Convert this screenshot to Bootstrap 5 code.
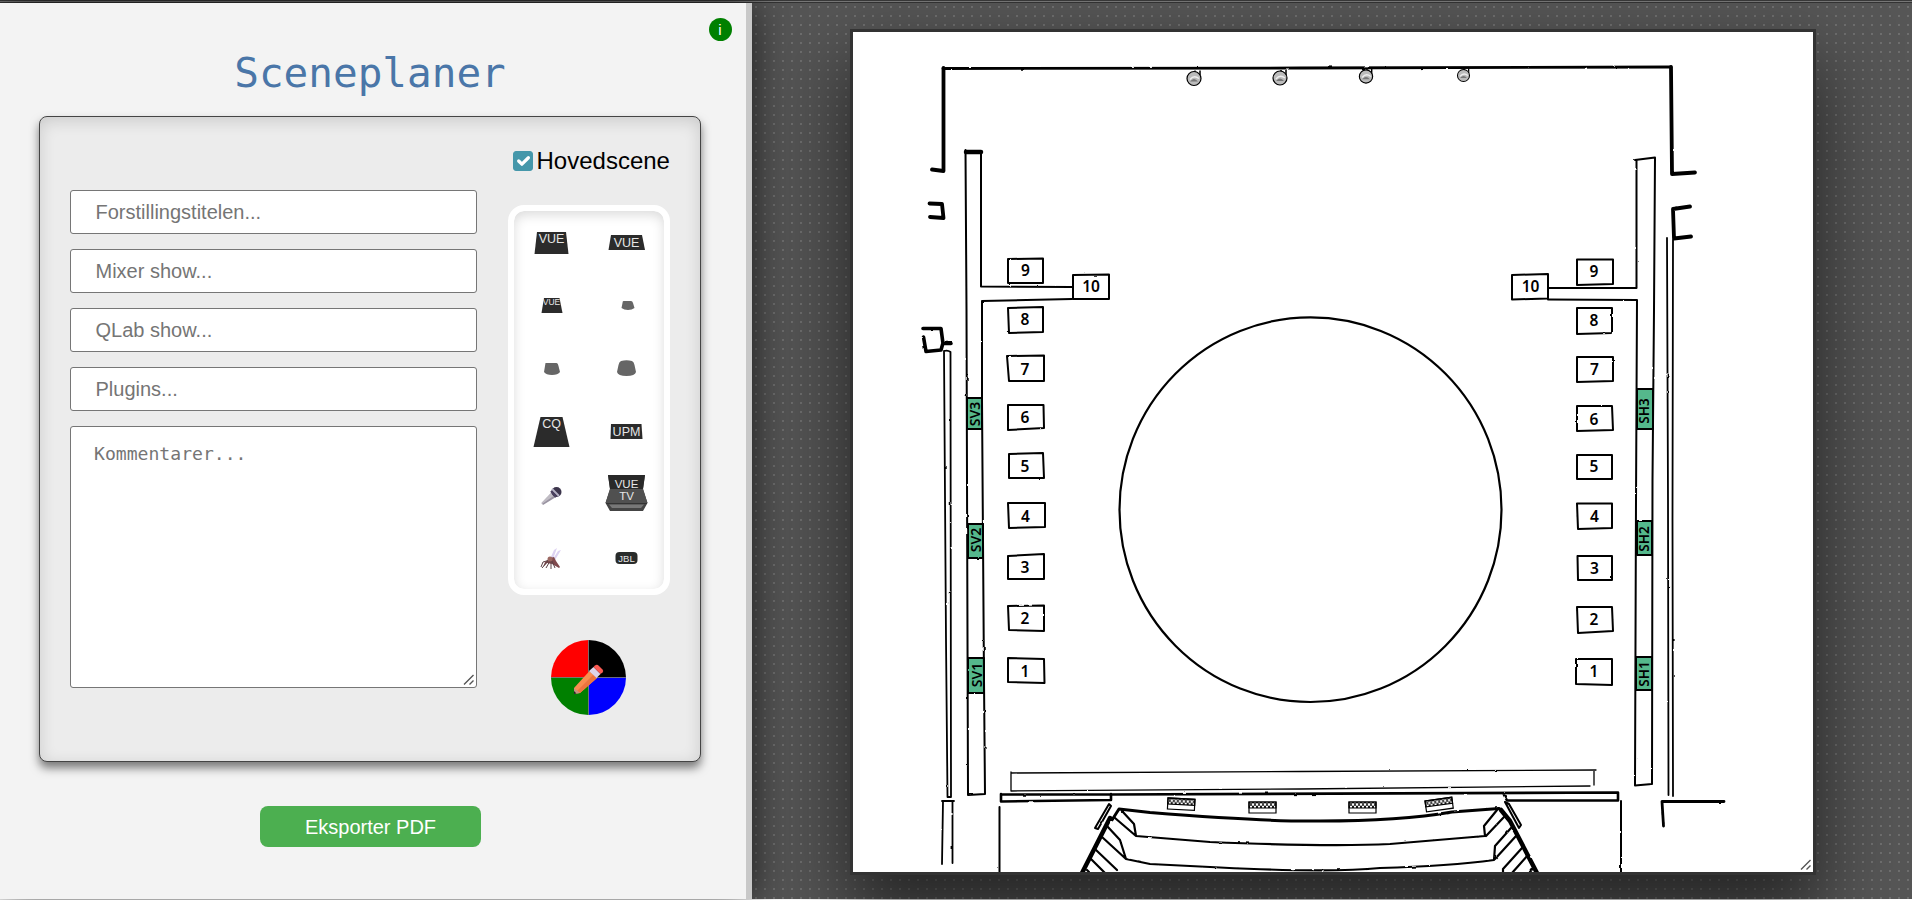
<!DOCTYPE html>
<html lang="no">
<head>
<meta charset="utf-8">
<title>Sceneplaner</title>
<link href="https://cdn.jsdelivr.net/npm/bootstrap@5.3.0/dist/css/bootstrap.min.css" rel="stylesheet">
<script src="https://cdn.jsdelivr.net/npm/bootstrap@5.3.0/dist/js/bootstrap.bundle.min.js"></script>
<style>
body{font-family:"Liberation Sans",sans-serif;color:#000;height:900px;overflow:hidden;background:#fff}
.topline{height:3px;background:linear-gradient(#393939 0 1px,#777 1px 2px,#333 2px)}
.app{height:896px}
.side{width:752px;background:#f3f3f3;border-right:6px solid #c8c8c8;z-index:2;box-shadow:0 0 38px rgba(0,0,0,.7)}
.info{width:23px;height:23px;top:14.5px;right:14.5px;background:#008000;font-size:15px;line-height:23px;font-weight:400}
.title{font:41px/48px "DejaVu Sans Mono",monospace;color:#4a76a8;margin:46px 0 0 -6px}
.panel{width:662px;height:646px;margin:19px 0 0 39px;border:1px solid #444;border-radius:8px;background:#ececec;padding:31px 30px 0;box-shadow:0 6px 10px rgba(0,0,0,.5),inset 0 4px 16px rgba(0,0,0,.14)}
.fields{width:407px;padding-top:42px;gap:15px}
.fields .form-control{height:44px;border:1px solid #767676;border-radius:3px;padding:0 24.5px;font-size:20px;color:#757575}
.fields .form-control::placeholder{color:#757575;opacity:1}
.fields textarea.form-control{height:262px;padding:15px 23px;font:18.1px/24px "DejaVu Sans Mono",monospace;resize:both}
.fields textarea::-webkit-resizer,.board::-webkit-resizer{background:url("data:image/svg+xml,%3Csvg xmlns='http://www.w3.org/2000/svg' width='15' height='15'%3E%3Cpath d='M3 12.500L12.500 3M8.500 12.500L12.500 8.500' stroke='%23555' stroke-width='1.400'/%3E%3C/svg%3E") no-repeat right bottom}
.tools{width:162px}
.hoved{font-size:24px;line-height:26px;height:26px;margin-left:5px}
.hoved .form-check-input{width:19.5px;height:19.5px;margin:0 4px 0 0;border-radius:3px;background-color:#4597aa;border-color:#4597aa;background-size:120%}
.palette{width:162px;height:390px;margin-top:31px;border:6px solid #fff;border-radius:16px;background:#fff;display:grid;grid-template-columns:75px 75px;grid-auto-rows:63px;box-shadow:inset 0 4px 12px rgba(0,0,0,.14)}
.palette svg{width:75px;height:63px;display:block}
.palette text{fill:#e6e6e6;text-anchor:middle;font-size:12.5px}
.wheel{width:75px;height:75px;margin:45px 0 0 43px;display:block}
.export{width:221px;height:41px;margin:44px 0 0 260px;border-radius:8px;background:#4caf50;color:#fff;font-size:20px;padding:0;border:0}
.room{background-color:#565656;background-image:radial-gradient(circle at 4px 4px,rgba(255,255,255,.22) .4px,transparent 1.3px);background-size:9px 9px;padding:26px 0 0 98px}
.board{width:966px;height:846px;border:3px solid #333;background:#fff;resize:both;overflow:hidden;box-shadow:0 36px 70px 4px rgba(0,0,0,.58)}
.board svg{display:block}
.board text{font-family:"Noto Sans","Open Sans",sans-serif;font-weight:600;font-size:15.5px;text-anchor:middle;fill:#000}
</style>
</head>
<body>
<div class="topline"></div>
<main class="app d-flex">
 <section class="side position-relative flex-shrink-0">
  <span class="info position-absolute rounded-circle text-white text-center">i</span>
  <h1 class="title text-center">Sceneplaner</h1>
  <div class="panel d-flex justify-content-between">
   <div class="fields d-flex flex-column">
    <input class="form-control" placeholder="Forstillingstitelen...">
    <input class="form-control" placeholder="Mixer show...">
    <input class="form-control" placeholder="QLab show...">
    <input class="form-control" placeholder="Plugins...">
    <textarea class="form-control" placeholder="Kommentarer..."></textarea>
   </div>
   <div class="tools">
    <label class="hoved d-flex align-items-center"><input type="checkbox" class="form-check-input" checked>Hovedscene</label>
    <div class="palette">
     <svg><path d="M23 21H52L54.500 43H20.500Z" fill="#2b2b2b"/><text x="37.500" y="32">VUE</text></svg>
     <svg><path d="M22 24H53L56 39H19.500Z" fill="#2b2b2b"/><text x="37.500" y="35.500">VUE</text></svg>
     <svg><path d="M30 24H45.500L48.500 39H27.500Z" fill="#2b2b2b"/><text x="37.500" y="31" style="font-size:8.500px">VUE</text></svg>
     <svg><path d="M34.500 27H42Q43.500 27 44 29L45.500 34Q43 36 39 36T32.500 34L33.500 29Q33.500 27 34.500 27Z" fill="#666"/></svg>
     <svg><path d="M31.500 26H42.500Q44 26 44.500 29L46 35Q44 38 38 38T30 35L31 29Q31.500 26 31.500 26Z" fill="#666"/></svg>
     <svg><path d="M32 24Q37.500 22.500 43 24Q45 25 45.500 28L47 35Q46 39 37.500 39T28 35L29.500 28Q30 25 32 24Z" fill="#666"/></svg>
     <svg><path d="M26.500 17H48.500L55.500 47H19.500Z" fill="#2b2b2b"/><text x="37.500" y="28">CQ</text></svg>
     <svg><path d="M22 24H52.500L53.500 39H21.500Z" fill="#2b2b2b"/><text x="37.500" y="35.500">UPM</text></svg>
     <svg><path d="M38 29L42 34L29 42L27.500 40Z" fill="#9993a1"/><path d="M38 29L41 32L28 41L27.500 40Z" fill="#c0bcc4"/><circle cx="42.500" cy="29" r="5" fill="#3c354c"/><path d="M38 26L45 33" stroke="#b5b0c5" stroke-width="2"/><path d="M37 28L42 34" stroke="#4a4060" stroke-width="2"/></svg>
     <svg><path d="M19 12H56L54 26L58.500 40L54 48H21L16.500 40L21 26Z" fill="#444"/><path d="M19 12H56L54 26H21Z" fill="#292929"/><path d="M21 26H54L58.500 40H16.500Z" fill="#505050"/><path d="M17 40.500H58" stroke="#333"/><path d="M20 41.500H55L52 45H23Z" fill="#777"/><text x="37.500" y="24.500" style="font-size:11.500px">VUE</text><text x="37.500" y="36.500" style="font-size:11.500px">TV</text></svg>
     <svg><path d="M36 33L40 24L43 22L39 33ZM39 33L44 25L47 24L41 34Z" fill="#ded3f2"/><path d="M36 32L40 31L42 35L46 41L45 42L38 38L33 37L29 41L31 36Z" fill="#80494d"/><path d="M34 35L28 42M36 35L32 42M37 35V43M38 35L41 42M36 34L29 36L27 41" stroke="#5c4246" fill="none"/><circle cx="36" cy="33" r="2.500" fill="#9b6862"/></svg>
     <svg><rect x="26.500" y="26" width="22" height="12" rx="4" fill="#292c2b"/><text x="37.500" y="35.500" style="font-size:9.500px">JBL</text></svg>
    </div>
    <svg class="wheel" viewBox="0 0 75 75"><path d="M37.500 37.500V0A37.500 37.500 0 0 0 0 37.500Z" fill="red"/><path d="M37.500 37.500V0A37.500 37.500 0 0 1 75 37.500Z"/><path d="M37.500 37.500H75A37.500 37.500 0 0 1 37.500 75Z" fill="#00f"/><path d="M37.500 37.500V75A37.500 37.500 0 0 1 0 37.500Z" fill="green"/><path d="M37.500 0V75M0 37.500H75" stroke="#777" stroke-width=".8"/><path d="M38.500 31L46 38L29 53L23 54V48Z" fill="#f98c50"/><path d="M42 35L46 38L29 53L26 51Z" fill="#ed743f"/><path d="M23 48L29 53L23 54Z" fill="#c29181"/><path d="M23 51L25.500 53.500L23 54Z" fill="#222"/><path d="M42.500 27L49.500 34L45.500 38L38 31Z" fill="#ddd5eb"/><path d="M44 25.500Q46 24 48 26L51.500 29.500Q53 31 51.500 32.500L49.500 34L42.500 27Z" fill="#fb5b54"/></svg>
   </div>
  </div>
  <button class="btn export">Eksporter PDF</button>
 </section>
 <section class="room flex-grow-1">
  <div class="board">
   <svg width="960" height="840" viewBox="853 32 960 840">
    <defs>
     <filter id="ink" filterUnits="userSpaceOnUse" x="853" y="32" width="960" height="840"><feTurbulence type="fractalNoise" baseFrequency=".11" numOctaves="2" seed="4"/><feDisplacementMap in="SourceGraphic" scale="1.800" xChannelSelector="R" yChannelSelector="G"/></filter>
     <g id="lamp"><path d="M1-8V-5M6-8V-3" stroke="#000" stroke-width="1.500"/><circle r="7" fill="#bbb" stroke="#000" stroke-width="1.200"/><path d="M-4 3Q0-2 4 3Z" fill="#777"/><path d="M-4 1Q0-4 5 0" fill="none" stroke="#eee" stroke-width="1.500"/></g>
     <pattern id="hatch" width="4" height="5" patternUnits="userSpaceOnUse"><path d="M0 0L4 5M4 0L0 5" stroke="#000"/></pattern>
     <g id="mon"><path d="M0 0H27V11H0Z" fill="#fff" stroke="#000" stroke-width="1.200"/><path d="M0 0H27V6H0Z" fill="url(#hatch)" stroke="#000" stroke-width="1.200"/></g>
    </defs>
    <g filter="url(#ink)" fill="none" stroke="#000" stroke-width="2" stroke-linecap="round" stroke-linejoin="round">
     <g fill="#55b88c">
      <path d="M967 398H982V429H967ZM968 524H983V558H968ZM968 658H984V693H968ZM1637 389H1653V429H1637ZM1637 521H1652V555H1637ZM1636 657H1652V690H1636Z"/>
     </g>
     <path d="M943 68.500L1300 68L1671 67" stroke-width="2.800"/>
     <path d="M943.500 68V171L932 169.500M929.500 203.500L942 204L943.500 218L930 217M1671 67L1672 174L1695 172.500M1690 206.500L1673 209L1674 238.500L1691 236.500" stroke-width="3.800"/>
     <path d="M923 328.500H941L943 343.500H951M923.500 337L926 351.500L941 350L943 343" stroke-width="3.600"/>
     <path d="M966 152H981" stroke-width="4.500"/>
     <path d="M965.500 150L966.500 310L967 480L968 795L985 794L984 680L982 400V301L1072 299M981 153V286.500L1072 287"/>
     <path d="M1635 160L1655 157.500L1654 310L1652.500 480L1652 784L1635 785.500L1636 500L1637 300L1548 299.500M1636.500 160L1636.500 288H1548"/>
     <path d="M944 351L946 640L947.500 797H951L950.500 352Q948 350 944 351M942 801H954M943 801L942 864M952.500 801V863M1667 238L1668 500L1668.500 795M1673 240L1672.500 520L1673 796" stroke-width="1.800"/>
     <path d="M1008 259L1043 258.500V283H1008ZM1073 275L1109 274.500V299H1073ZM1008 308L1043 307V332L1009 333ZM1007 356L1044 355.500V381H1009ZM1008 405H1043.500L1044 428L1008 430ZM1009 454L1043 453L1044 478H1009ZM1008 503H1045V527L1009 528ZM1008 556L1044 554V579H1008ZM1008 606L1044 605.500V631L1009 630ZM1008 658L1044 659L1044.500 683L1008 682Z"/>
     <path d="M1512 275L1548 274V298.500L1512 299.500ZM1577 259.500H1613V284L1577 285ZM1577 308H1612V333L1577 334ZM1577 357H1613V381L1577 382ZM1577 406H1612L1613 430L1577 431ZM1577 455H1612V479H1577ZM1577 503.500H1612V528L1578 529ZM1577.500 556H1612V580H1578ZM1577 607H1612L1613 631L1578 633ZM1576 659H1612V685L1576 684Z"/>
     <path d="M1011 773L1300 771.500L1596 770M1594 771V785M1590 786L1300 789L1011 791V772" stroke-width="1.300"/>
     <path d="M1001 794.500H1111L1618 792.500V800.500H1507L1503 793M1001 794V801.500L1111 800V794" stroke-width="2.600"/>
     <path d="M999.500 807V872M1621 801V872"/>
     <path d="M1663 801.500H1724M1662 801.500L1663.500 826" stroke-width="2.800"/>
     <path d="M1109 804L1111 806L1098 829L1095 828ZM1505 802L1509 804L1521 825L1519 828Z"/>
     <path d="M1110 818L1082 873M1501 810L1510 821L1537 873" stroke-width="4.500"/>
     <path d="M1112 820L1119 809L1150 812.500Q1270 822 1320 821Q1400 821 1452 812L1499 808.500" stroke-width="3"/>
     <path d="M1122 811L1134 824L1136 836L1115 818M1136 836L1210 842Q1330 847 1390 844L1485 836L1484 826L1497 810M1486 836L1504 817M1107 826L1120 840L1126 859L1102 837M1126 859L1150 864L1220 867.500Q1330 873 1380 868Q1450 866 1494 860L1495 846L1511 828M1495 859L1516 836M1096 850L1117 870M1091 859L1105 873M1087 870L1089 872M1503 873V869L1522 848M1512 873L1528 855M1530 872L1533 868" stroke-width="2.200"/>
    </g>
    <ellipse cx="1310.500" cy="509.700" rx="191" ry="192.300" fill="none" stroke="#000" stroke-width="2.200"/>
    <use href="#lamp" x="1194" y="78.500"/><use href="#lamp" x="1280" y="78"/><use href="#lamp" transform="translate(1366 76.500) scale(.95)"/><use href="#lamp" transform="translate(1463.500 75.500) scale(.86)"/>
    <use href="#mon" transform="translate(1168 798) rotate(3)"/><use href="#mon" x="1249" y="802"/><use href="#mon" x="1349" y="802"/><use href="#mon" transform="translate(1425 801) rotate(-8)"/>
    <g>
     <text x="1025.500" y="275.500">9</text><text x="1091" y="292">10</text><text x="1025" y="325">8</text><text x="1025" y="374.500">7</text><text x="1025" y="422.500">6</text><text x="1025" y="471.500">5</text><text x="1025.500" y="521.500">4</text><text x="1025" y="572.500">3</text><text x="1025" y="623.500">2</text><text x="1025" y="676.500">1</text>
     <text x="1594" y="277">9</text><text x="1530.500" y="292">10</text><text x="1594" y="325.500">8</text><text x="1594.500" y="375">7</text><text x="1594" y="424.500">6</text><text x="1594" y="472">5</text><text x="1594.500" y="521.500">4</text><text x="1594.500" y="573.500">3</text><text x="1594" y="624.500">2</text><text x="1594" y="676.500">1</text>
     <text transform="translate(980 414) rotate(-90)" style="font-size:14px">SV3</text><text transform="translate(981 540) rotate(-90)" style="font-size:14px">SV2</text><text transform="translate(982 675) rotate(-90)" style="font-size:14px">SV1</text>
     <text transform="translate(1649 411) rotate(-90)" style="font-size:13.500px">SH3</text><text transform="translate(1649 539) rotate(-90)" style="font-size:13.500px">SH2</text><text transform="translate(1649 674) rotate(-90)" style="font-size:13.500px">SH1</text>
    </g>
   </svg>
  </div>
 </section>
</main>
</body>
</html>
